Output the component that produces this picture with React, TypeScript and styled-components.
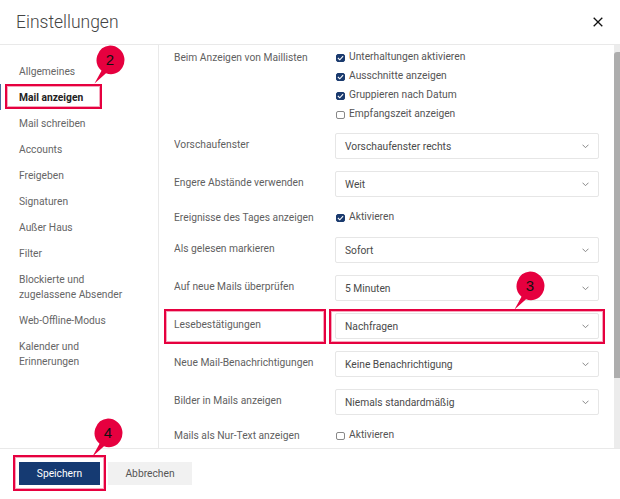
import styled, { createGlobalStyle } from "styled-components"

const GlobalStyle = createGlobalStyle`
  html, body {
    margin: 0;
    padding: 0;
    background: #fff;
  }
  * {
    box-sizing: border-box;
  }
`

const Check = ({ checked, label }: { checked?: boolean; label: string }) => (
  <CheckRow>
    <CheckBox $checked={checked}>
      {checked && (
        <svg width="7" height="6" viewBox="0 0 7 6" fill="none">
          <path d="M.9 3 2.800 4.800 6.100 1.200" stroke="#fff" strokeWidth="1.100" />
        </svg>
      )}
    </CheckBox>
    {label}
  </CheckRow>
)

const Select = ({ value }: { value: string }) => (
  <SelectBox>
    {value}
    <svg width="7" height="5" viewBox="0 0 7 5" fill="none">
      <path d="M.5.7 3.500 3.700 6.500.7" stroke="#888" strokeWidth="1" />
    </svg>
  </SelectBox>
)

const Pin = ({ n, x, y }: { n: number; x: number; y: number }) => (
  <PinWrap $x={x} $y={y}>
    <svg width="32" height="40" viewBox="0 0 32 40">
      <path
        d="M16 1.500a14.500 14.500 0 0 1 5 28.100 14.500 14.500 0 0 1-9-.300L.5 39.500l7-12.700A14.500 14.500 0 0 1 16 1.500Z"
        fill="#e6003f"
      />
    </svg>
    <PinNumber>{n}</PinNumber>
  </PinWrap>
)

const navItems = [
  "Allgemeines",
  "Mail anzeigen",
  "Mail schreiben",
  "Accounts",
  "Freigeben",
  "Signaturen",
  "Außer Haus",
  "Filter",
  "Blockierte und zugelassene Absender",
  "Web-Offline-Modus",
  "Kalender und Erinnerungen"
]

const selects = [
  ["Vorschaufenster", "Vorschaufenster rechts"],
  ["Engere Abstände verwenden", "Weit"]
]

const selectsBelow = [
  ["Als gelesen markieren", "Sofort"],
  ["Auf neue Mails überprüfen", "5 Minuten"],
  ["Lesebestätigungen", "Nachfragen"],
  ["Neue Mail-Benachrichtigungen", "Keine Benachrichtigung"],
  ["Bilder in Mails anzeigen", "Niemals standardmäßig"]
]

const App = () => (
  <Dialog>
    <GlobalStyle />
    <Header>
      <Title>Einstellungen</Title>
      <svg width="10" height="10" viewBox="0 0 10 10" fill="none">
        <path d="M.7.7l8.600 8.600M9.300.7.700 9.300" stroke="#111" strokeWidth="1.300" />
      </svg>
    </Header>
    <Body>
      <Sidebar>
        {navItems.map((item) => (
          <NavItem key={item} $active={item === "Mail anzeigen"}>
            {item}
          </NavItem>
        ))}
      </Sidebar>
      <Content>
        <Row>
          <Label $inline>Beim Anzeigen von Maillisten</Label>
          <CheckGroup>
            <Check checked label="Unterhaltungen aktivieren" />
            <Check checked label="Ausschnitte anzeigen" />
            <Check checked label="Gruppieren nach Datum" />
            <Check label="Empfangszeit anzeigen" />
          </CheckGroup>
        </Row>
        {selects.map(([label, value]) => (
          <Row key={label}>
            <Label>{label}</Label>
            <Select value={value} />
          </Row>
        ))}
        <Row>
          <Label $inline>Ereignisse des Tages anzeigen</Label>
          <Check checked label="Aktivieren" />
        </Row>
        {selectsBelow.map(([label, value]) => (
          <Row key={label}>
            <Label>{label}</Label>
            <Select value={value} />
          </Row>
        ))}
        <Row>
          <Label $inline>Mails als Nur-Text anzeigen</Label>
          <Check label="Aktivieren" />
        </Row>
      </Content>
      <ScrollTrack>
        <ScrollThumb />
      </ScrollTrack>
    </Body>
    <Footer>
      <PrimaryButton>Speichern</PrimaryButton>
      <SecondaryButton>Abbrechen</SecondaryButton>
    </Footer>

    <Highlight $x={5} $y={84} $w={97} $h={25} />
    <Highlight $x={164} $y={309} $w={162} $h={35} />
    <Highlight $x={329} $y={309} $w={276} $h={35} />
    <Highlight $x={13} $y={455} $w={93} $h={36} />
    <Pin n={2} x={94} y={44} />
    <Pin n={3} x={514} y={270} />
    <Pin n={4} x={92} y={417} />
  </Dialog>
)

const Dialog = styled.div`
  position: relative;
  display: flex;
  flex-direction: column;
  width: 620px;
  height: 499px;
  overflow: hidden;
  background: #fff;
  font-family: Roboto, "Liberation Sans", sans-serif;
  font-size: 10.250px;
  color: #5f5f5f;
`

const Header = styled.header`
  display: flex;
  align-items: center;
  justify-content: space-between;
  flex: none;
  height: 45px;
  padding: 0 17px 0 16px;
  border-bottom: 1px solid #e9e9e9;
`

const Title = styled.h1`
  margin: 0;
  font-size: 17.500px;
  font-weight: 300;
  color: #444;
`

const Body = styled.div`
  display: flex;
  flex: 1;
  min-height: 0;
`

const Sidebar = styled.nav`
  flex: none;
  width: 159px;
  padding-top: 13px;
  border-right: 1px solid #e9e9e9;
`

const NavItem = styled.div<{ $active?: boolean }>`
  padding: 5.500px 20px 5.500px ${({ $active }) => ($active ? "18px" : "19px")};
  line-height: 15px;
  border-left: ${({ $active }) => ($active ? "1px solid #4a6c9e" : "none")};
  font-weight: ${({ $active }) => ($active ? 700 : 400)};
  color: ${({ $active }) => ($active ? "#222" : "#666")};
`

const Content = styled.section`
  display: flex;
  flex-direction: column;
  flex: 1;
  gap: 12px;
  min-width: 0;
  padding: 4px 15px 0;
  overflow: hidden;
`

const Row = styled.div`
  display: grid;
  flex: none;
  grid-template-columns: 161px 264px;
`

const Label = styled.div<{ $inline?: boolean }>`
  padding-top: ${({ $inline }) => ($inline ? "1px" : "4px")};
  line-height: 15px;
  white-space: nowrap;
  overflow: hidden;
`

const CheckGroup = styled.div`
  display: flex;
  flex-direction: column;
  gap: 4px;
`

const CheckRow = styled.div`
  display: flex;
  align-items: center;
  gap: 4px;
  height: 15px;
  line-height: 15px;
  color: #555;
`

const CheckBox = styled.span<{ $checked?: boolean }>`
  display: inline-flex;
  align-items: center;
  justify-content: center;
  flex: none;
  width: 9px;
  height: 8px;
  margin: 2px 0 0 1px;
  border-radius: 2px;
  background: ${({ $checked }) => ($checked ? "#1a3a6e" : "#fff")};
  border: 1px solid ${({ $checked }) => ($checked ? "#1a3a6e" : "#888")};
`

const SelectBox = styled.div`
  display: flex;
  align-items: center;
  justify-content: space-between;
  height: 26px;
  padding: 0 9px;
  border: 1px solid #e6e6e6;
  border-radius: 2px;
  color: #4a4a4a;
`

const ScrollTrack = styled.div`
  flex: none;
  width: 6px;
  padding-top: 7px;
  background: #ececec;
`

const ScrollThumb = styled.div`
  height: 326px;
  border-radius: 3px 0 0 0;
  background: #adadad;
`

const Footer = styled.footer`
  display: flex;
  flex: none;
  gap: 8px;
  height: 51px;
  padding: 13px 19px 0;
  border-top: 1px solid #e9e9e9;
`

const PrimaryButton = styled.button`
  width: 81px;
  height: 23px;
  border: 0;
  background: #153a72;
  color: #fff;
  font: inherit;
`

const SecondaryButton = styled.button`
  width: 84px;
  height: 23px;
  border: 0;
  background: #f1f1f1;
  color: #555;
  font: inherit;
`

const Highlight = styled.div<{ $x: number; $y: number; $w: number; $h: number }>`
  position: absolute;
  left: ${({ $x }) => $x}px;
  top: ${({ $y }) => $y}px;
  width: ${({ $w }) => $w}px;
  height: ${({ $h }) => $h}px;
  border: 2px solid #e6003f;
  box-shadow: inset 0 0 0 1px rgba(230, 0, 63, 0.35);
`

const PinWrap = styled.div<{ $x: number; $y: number }>`
  position: absolute;
  left: ${({ $x }) => $x}px;
  top: ${({ $y }) => $y}px;
  width: 32px;
  height: 40px;
  svg {
    display: block;
  }
`

const PinNumber = styled.span`
  position: absolute;
  left: 0;
  top: 6px;
  width: 32px;
  text-align: center;
  font-family: "Liberation Sans", sans-serif;
  font-size: 15px;
  line-height: 20px;
  color: #111;
`

export default App
